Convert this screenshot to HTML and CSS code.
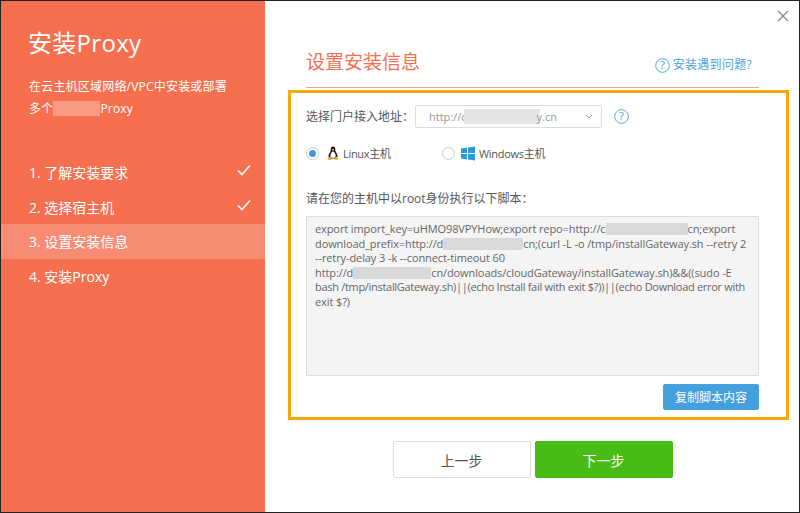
FILE: index.html
```html
<!DOCTYPE html>
<html lang="zh-CN">
<head>
<meta charset="utf-8">
<title>安装Proxy</title>
<link rel="stylesheet" href="styles.css">
</head>
<body>
<div class="window">
  <aside class="sidebar">
    <h1 class="side-title">安装Proxy</h1>
    <p class="side-desc">在云主机区域网络/VPC中安装或部署<br>多个<span class="side-mask"></span>Proxy</p>
    <ul class="steps">
      <li class="step"><span>1. 了解安装要求</span><svg class="check" viewBox="0 0 14 12"><path d="M1 6.5 L5 10.5 L13 1.5" fill="none" stroke="#fff" stroke-width="1.6"/></svg></li>
      <li class="step"><span>2. 选择宿主机</span><svg class="check" viewBox="0 0 14 12"><path d="M1 6.5 L5 10.5 L13 1.5" fill="none" stroke="#fff" stroke-width="1.6"/></svg></li>
      <li class="step step-active"><span>3. 设置安装信息</span></li>
      <li class="step"><span>4. 安装Proxy</span></li>
    </ul>
  </aside>
  <main class="main">
    <div class="close-row">
      <svg class="close" viewBox="0 0 12 12"><path d="M1 1 L11 11 M11 1 L1 11" stroke="#8a8a8a" stroke-width="1.3" fill="none"/></svg>
    </div>
    <header class="head">
      <h2 class="head-title">设置安装信息</h2>
      <a class="head-help">
        <svg class="help" viewBox="0 0 16 16"><circle cx="8" cy="8" r="7.3" fill="none" stroke="#4aa3e0" stroke-width="1"/><text x="8" y="12" text-anchor="middle" class="help-mark">?</text></svg>
        安装遇到问题?
      </a>
    </header>
    <section class="panel">
      <div class="addr-row">
        <label class="addr-label">选择门户接入地址：</label>
        <div class="select">
          <span class="select-text">http://c<span class="mask mask-select"></span>y.cn</span>
          <svg class="chev" viewBox="0 0 8 5"><path d="M1 1 L4 4 L7 1" fill="none" stroke="#999" stroke-width="1"/></svg>
        </div>
        <svg class="help help-addr" viewBox="0 0 16 16"><circle cx="8" cy="8" r="7.3" fill="none" stroke="#4aa3e0" stroke-width="1"/><text x="8" y="12" text-anchor="middle" class="help-mark">?</text></svg>
      </div>
      <div class="os-row">
        <div class="os os-linux">
          <span class="radio radio-on"></span>
          <svg class="os-icon" viewBox="0 0 14 16">
            <path d="M7 0.5 C4.8 0.5 4.4 2.4 4.5 4.4 C4.5 6 2.6 7.6 2.2 10.4 C2 12 3 13 3.6 13.2 L10.4 13.2 C11 13 12 12 11.8 10.4 C11.4 7.6 9.5 6 9.5 4.4 C9.6 2.4 9.2 0.5 7 0.5Z" fill="#1c1c1c"/>
            <path d="M7 5.6 C5.2 6.6 4 9 4.2 11 C4.4 12.4 5.4 12.8 7 12.8 C8.6 12.8 9.6 12.4 9.8 11 C10 9 8.8 6.6 7 5.6Z" fill="#fff"/>
            <path d="M5.6 3.6 C6.2 3 7.8 3 8.4 3.6 L7 5.2Z" fill="#f2b01e"/>
            <path d="M3.4 11.4 L0.8 13.6 L2.4 15 L5.6 14.6 L5 12.6Z M10.6 11.4 L13.2 13.6 L11.6 15 L8.4 14.6 L9 12.6Z" fill="#f2b01e"/>
          </svg>
          <span class="os-name">Linux主机</span>
        </div>
        <div class="os os-windows">
          <span class="radio"></span>
          <svg class="os-icon" viewBox="0 0 14 14">
            <path d="M0 2 L6 1.1 V6.6 H0Z M7 1 L14 0 V6.6 H7Z M0 7.4 H6 V12.9 L0 12Z M7 7.4 H14 V14 L7 13Z" fill="#2b9ad6"/>
          </svg>
          <span class="os-name">Windows主机</span>
        </div>
      </div>
      <p class="script-label">请在您的主机中以root身份执行以下脚本：</p>
      <div class="code">export import_key=uHMO98VPYHow;export repo=<span class="nb">http://c<span class="mask mask-a"></span>cn;export</span> download_prefix=<span class="nb">http://d<span class="mask mask-b"></span>cn;(curl</span> -L -o /tmp/installGateway.sh --retry 2 <span class="nb">--retry-delay</span> 3 -k <span class="nb">--connect-timeout</span> 60 <span class="nb">http://d<span class="mask mask-c"></span>cn/downloads/cloudGateway/installGateway.sh)&amp;&amp;((sudo</span> <span class="nb">-E</span> <span class="tight">bash /tmp/installGateway.sh)||(echo Install fail with exit $?))||(echo Download error with</span> exit $?)</div>
      <div class="copy-row"><button class="copy">复制脚本内容</button></div>
    </section>
    <footer class="actions">
      <button class="btn btn-prev">上一步</button>
      <button class="btn btn-next">下一步</button>
    </footer>
  </main>
</div>
</body>
</html>
```
FILE: styles.css
```css
* { box-sizing: border-box; }
html, body { margin: 0; padding: 0; }
body {
  width: 800px;
  height: 513px;
  overflow: hidden;
  font-family: "Open Sans", "Noto Sans CJK SC", sans-serif;
  color: #555;
}
.window {
  width: 800px;
  height: 513px;
  border: 1px solid #222;
  background: #fff;
  display: flex;
}
.sidebar {
  width: 264px;
  flex: none;
  background: #f67050;
  color: #fff;
}
.side-title {
  margin: 25px 27px 0;
  font-size: 24px;
  line-height: 34px;
  font-weight: 400;
  letter-spacing: 0.3px;
}
.side-desc {
  margin: 16px 28px 0;
  font-size: 12px;
  line-height: 22px;
  letter-spacing: 0.2px;
}
.side-mask {
  display: inline-block;
  width: 47px;
  height: 15px;
  vertical-align: -3px;
  background: #f99a84;
}
.steps {
  list-style: none;
  margin: 35px 0 0;
  padding: 0;
}
.step {
  height: 34.5px;
  padding: 0 14px 0 28px;
  display: flex;
  align-items: center;
  justify-content: space-between;
  font-size: 14px;
}
.step-active { background: #f88c73; }
.check { width: 14px; height: 12px; margin-top: -4px; }
.main {
  flex: 1;
  min-width: 0;
  padding: 0 10px 0 23px;
}
.close-row {
  height: 30px;
  padding: 9px 0 0;
  display: flex;
  justify-content: flex-end;
}
.close { width: 12px; height: 12px; }
.head {
  margin: 0 30px 0 18px;
  height: 57px;
  border-bottom: 1px solid #f9a38f;
  display: flex;
  justify-content: space-between;
  align-items: flex-start;
}
.head-title {
  margin: 15px 0 0;
  font-size: 19px;
  line-height: 32px;
  font-weight: 400;
  color: #f67050;
}
.head-help {
  margin-top: 25px;
  margin-right: 7px;
  display: flex;
  align-items: center;
  gap: 3px;
  font-size: 12px;
  line-height: 18px;
  letter-spacing: 0.3px;
  color: #4aa3e0;
}
.help { width: 15px; height: 15px; flex: none; }
.help-mark { font-size: 12px; fill: #4aa3e0; font-family: "Open Sans", sans-serif; }
.panel {
  margin-top: 2px;
  height: 330px;
  border: 3px solid #f8a90a;
  padding: 11px 27px 0 15px;
}
.addr-row {
  display: flex;
  align-items: center;
  height: 24px;
}
.addr-label { width: 109px; font-size: 12px; color: #555; }
.select {
  width: 187px;
  height: 23px;
  border: 1px solid #ddd;
  border-radius: 2px;
  padding: 0 8px 0 13px;
  display: flex;
  align-items: center;
  justify-content: space-between;
  font-size: 11px;
  color: #999;
}
.select-text { display: flex; align-items: center; }
.mask { display: inline-block; background: #d9d9d9; }
.mask-select { width: 76px; height: 15px; margin: 0 -3px; background: #e4e4e4; }
.chev { width: 8px; height: 5px; }
.help-addr { margin-left: 12px; }
.os-row {
  display: flex;
  margin-top: 13px;
  height: 24px;
  align-items: center;
}
.os { display: flex; align-items: center; font-size: 11px; letter-spacing: -0.3px; color: #555; }
.os-linux { width: 136px; }
.radio {
  width: 13px;
  height: 13px;
  border: 1px solid #ccc;
  border-radius: 50%;
  background: #fff;
  display: flex;
  align-items: center;
  justify-content: center;
  margin-right: 7px;
}
.radio-on::before {
  content: "";
  width: 7px;
  height: 7px;
  border-radius: 50%;
  background: #3d9ce0;
}
.os-icon { width: 14px; height: 15px; margin-right: 3px; }
.os-windows .radio { margin-right: 6px; }
.os-windows .os-icon { margin-right: 4px; }
.script-label {
  margin: 25px 0 0;
  font-size: 12px;
  line-height: 18px;
  color: #555;
}
.code {
  margin-top: 8px;
  height: 160px;
  border: 1px solid #ddd;
  background: #f4f4f4;
  padding: 5px 2px 5px 8px;
  font-size: 11px;
  line-height: 14.6px;
  letter-spacing: -0.1px;
  color: #666;
}
.nb { white-space: nowrap; }
.tight { white-space: nowrap; letter-spacing: -0.3px; }
.mask-a { width: 82px; height: 12px; vertical-align: -2px; }
.mask-b { width: 80px; height: 12px; vertical-align: -2px; }
.mask-c { width: 78px; height: 12px; vertical-align: -2px; }
.copy-row { display: flex; justify-content: flex-end; margin-top: 8px; }
.copy {
  width: 96px;
  height: 26px;
  border: 1px solid #4a9fe0;
  border-radius: 2px;
  background: #449fdf;
  color: #fff;
  font-family: inherit;
  font-size: 12px;
  padding: 0;
}
.actions {
  margin-top: 21px;
  display: flex;
  justify-content: center;
  gap: 4px;
  padding-right: 12px;
}
.btn {
  width: 138px;
  height: 37px;
  border-radius: 2px;
  font-family: inherit;
  font-size: 14px;
  padding: 0;
}
.btn-prev { background: #fff; border: 1px solid #ddd; color: #555; }
.btn-next { background: #46bc15; border: 1px solid #46bc15; color: #fff; }
```
